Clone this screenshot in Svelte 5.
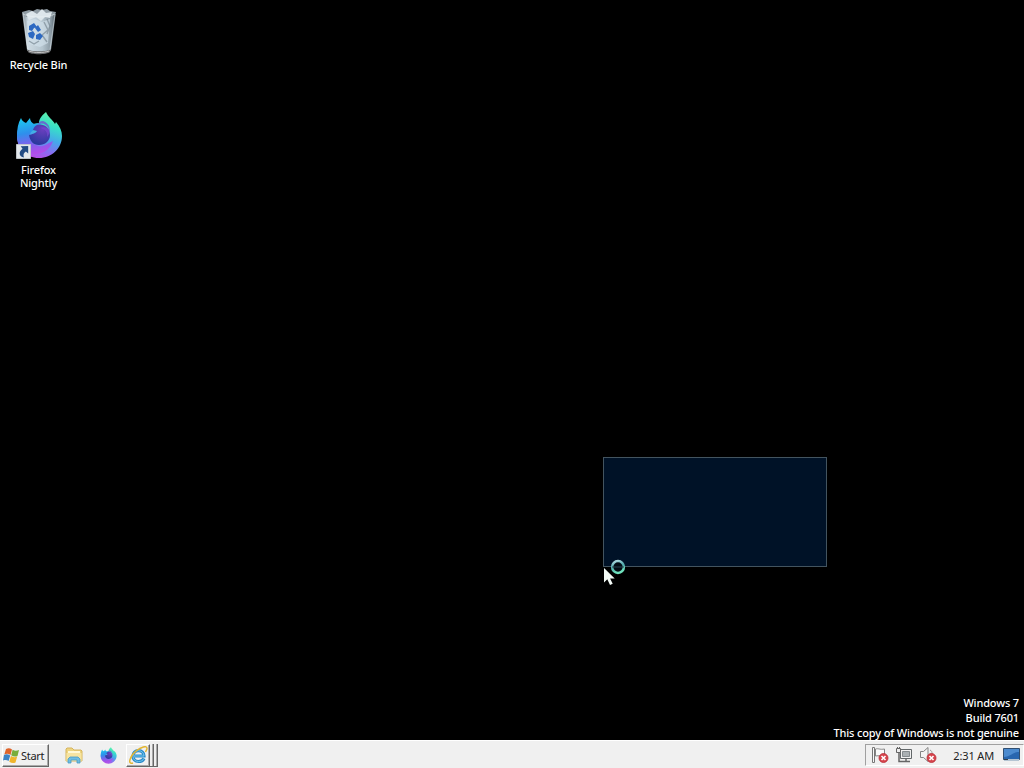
<script lang="ts">
    interface Selection {
        x: number;
        y: number;
        width: number;
        height: number;
    }

    let selection: Selection = $state({ x: 603, y: 457, width: 224, height: 110 });
    let pointer = $state({ x: 603, y: 558 });
    let time = $state('2:31 AM');

    const buildInfo = ['Windows 7', 'Build 7601', 'This copy of Windows is not genuine'];
</script>

{#snippet firefox(id: string, size: number)}
    <svg width={size} height={size} viewBox="0 0 48 48" aria-hidden="true">
        <defs>
            <linearGradient id="{id}-body" x1="0.75" y1="0" x2="0.4" y2="1">
                <stop offset="0" stop-color="#62f3a8" />
                <stop offset="0.28" stop-color="#38dfc8" />
                <stop offset="0.55" stop-color="#45a8ea" />
                <stop offset="0.8" stop-color="#8b6cf2" />
                <stop offset="1" stop-color="#b94be6" />
            </linearGradient>
            <linearGradient id="{id}-fox" x1="0.3" y1="0" x2="0.5" y2="1">
                <stop offset="0" stop-color="#1cc6ee" />
                <stop offset="0.4" stop-color="#2e8fec" />
                <stop offset="0.7" stop-color="#7d62ee" />
                <stop offset="1" stop-color="#b54be8" />
            </linearGradient>
            <radialGradient id="{id}-globe" cx="0.65" cy="0.25" r="0.8">
                <stop offset="0" stop-color="#6a3fbe" />
                <stop offset="1" stop-color="#26389c" />
            </radialGradient>
        </defs>
        <path d="M31 1c2 5 7 8 9 12l1-2c4 5 6 9 6 14 0 12-10 22-23 22S2 38 2 25c0-4 1-7 3-10l19-3c0-4 3-8 7-11Z" fill="url(#{id}-body)" />
        <path d="M6 7c1 3 3 4 5 5l4-5c0 3 2 5 4 6l7-1c-1 3-3 5-6 6l-4 3c-2 3-1 8 2 11 4 4 10 4 14 1l6-3c-3 9-10 13-18 13C9 43 2 35 2 25 2 18 3 12 6 7Z" fill="url(#{id}-fox)" />
        <path d="M22 14c6-2 13 2 13 10 0 6-5 10-11 10s-9-4-10-10c3-1 6-1 8-4l-4-1c1-3 2-4 4-5Z" fill="url(#{id}-globe)" />
        <path d="M22 14c4-3 10-1 12 4-3-2-6-2-9-1 5 1 8 4 7 9 5-5 3-14-4-16-3 0-5 2-6 4Z" fill="#7747d0" opacity="0.75" />
    </svg>
{/snippet}

<div class="screen">
    <main class="desktop">
        <div class="shortcut recycle">
            <svg width="38" height="48" viewBox="0 0 38 48" aria-hidden="true">
                <defs>
                    <linearGradient id="bin" x1="0" x2="1">
                        <stop offset="0" stop-color="#77838c" />
                        <stop offset="0.18" stop-color="#cddae2" />
                        <stop offset="0.6" stop-color="#b5c5cf" />
                        <stop offset="0.85" stop-color="#8a99a3" />
                        <stop offset="1" stop-color="#4e5a62" />
                    </linearGradient>
                </defs>
                <path d="M2 5h34l-5 38c-2 4-22 4-24 0Z" fill="url(#bin)" />
                <path d="M2 5 9 3l4 1 4-2 5 1 5-1 3 2 6 1-4 5H6Z" fill="#8f9ba3" />
                <path d="m6 7 6-3 5 3 5-5 4 4 6-1-2 6-5-1-4 4-5-4-7 3Z" fill="#dde6eb" />
                <path d="M3 7c8 4 24 4 32 0M3 6l5 37M35 7l-5 36" fill="none" stroke="#eef4f7" stroke-width="0.8" opacity="0.6" />
                <path d="m7 14 8-2 7 3 8-3-2 24-8 4-11-3Z" fill="#d0dfea" opacity="0.7" />
                <path d="m24 15 4 8-6 5 5 7M9 34l5 3 5-3M27 12l3 7-3 8" fill="none" stroke="#73838e" stroke-width="1.4" opacity="0.65" />
                <path d="m9 19 5-3 3 4-3 1-2 3-3-1Zm9-1 3 5-3 2-3-4ZM8 26l5-2 2 3-2 5-4-2Zm8 2 4-2 3 3-3 4-4-1Z" fill="#2c69c2" />
                <path d="M7 42c2 3 22 3 24 0l-1 3c-3 3-20 3-22 0Z" fill="#696b6d" />
                <path d="M9 44c5 2 15 2 20 0" fill="none" stroke="#c4c4c4" />
            </svg>
            <span class="label">Recycle Bin</span>
        </div>

        <div class="shortcut nightly">
            <div class="icon">
                {@render firefox('desk', 48)}
                <svg class="arrow" width="15" height="15" viewBox="0 0 16 16" aria-hidden="true">
                    <path d="M.5.5h15v15H.5Z" fill="#e3e8ec" stroke="#c3c9cd" />
                    <path d="M5 2.500 13 2v8l-2.500-2C8 9.500 7.500 11.500 8.500 14.500 3 13.500 2.500 8 7 5Z" fill="#224b84" />
                </svg>
            </div>
            <span class="label">Firefox<br />Nightly</span>
        </div>

        <div
            class="selection"
            style="left: {selection.x}px; top: {selection.y}px; width: {selection.width}px; height: {selection.height}px"
        ></div>

        <svg class="pointer" style="left: {pointer.x}px; top: {pointer.y}px" width="24" height="30" viewBox="0 0 24 30" aria-hidden="true">
            <defs>
                <linearGradient id="busy" x1="0" y1="0" x2="0.3" y2="1">
                    <stop offset="0" stop-color="#b6dde4" />
                    <stop offset="0.5" stop-color="#4fa9ac" />
                    <stop offset="1" stop-color="#6fe2bd" />
                </linearGradient>
            </defs>
            <circle cx="15" cy="9" r="5.9" fill="#020b14" stroke="url(#busy)" stroke-width="2.5" />
            <path d="M9 9h12" stroke="#26434f" />
            <path d="M1 10v14.5l3.3-3.2L7 27l2.7-1.2L7.1 20.5h4.6Z" fill="#f4fbf7" />
        </svg>

        <div class="build">
            {#each buildInfo as line}
                <div>{line}</div>
            {/each}
        </div>
    </main>

    <footer class="taskbar">
        <button class="start">
            <svg width="17" height="17" viewBox="0 0 17 17" aria-hidden="true">
                <path d="M3 2c2-1 4-1 6 .5L7.500 8C5.500 6.500 3.500 6.500 1.300 7.500Z" fill="#df642b" />
                <path d="M9.600 2.800c2 1.300 4 1.300 6.400.3L14.500 9c-2 1-4 .8-6.300-.7Z" fill="#78ad3b" />
                <path d="M1 8c2-1 4-1 6.200.6L5.600 14C4 12.800 2 12.800 0 13.500Z" fill="#3c83c6" />
                <path d="M7.900 9c2 1.300 4 1.500 6.300.6L12.500 15.500c-2 1-4 .8-6.200-.8Z" fill="#f0b52d" />
            </svg>
            <span>Start</span>
        </button>

        <div class="quick">
            <svg width="18" height="17" viewBox="0 0 18 17" aria-hidden="true">
                <path d="M1 14V2l1-1h5l2 2h7l1 1v10Z" fill="#eed580" stroke="#d5b45e" />
                <path d="M3 4h12v3H3Z" fill="#fff9d7" />
                <path d="M1.500 6h15v8h-15Z" fill="#f7e4a1" />
                <path d="M3 16v-4l2-2h8l2 2v4h-3v-3H6v3Z" fill="#70bde1" stroke="#4799c4" stroke-width="0.8" />
            </svg>
            {@render firefox('quick', 17)}
        </div>

        <div class="group">
            <button class="task" aria-label="Internet Explorer">
                <svg width="19" height="19" viewBox="0 0 19 19" aria-hidden="true">
                    <path d="M15 12.500c-1 2-3 3-5.500 3-3.500 0-5.500-2.300-5.500-5.300 0-3.200 2.300-5.500 5.500-5.500s5.500 2.200 5.500 5.300H6" fill="none" stroke="#2989ca" stroke-width="3.200" />
                    <path d="M15 12.500c-1 2-3 3-5.500 3-3.500 0-5.500-2.300-5.500-5.300 0-3.200 2.300-5.500 5.500-5.500s5.500 2.200 5.500 5.300H6" fill="none" stroke="#73c9ee" />
                    <path d="M4 17C-2 19 1 10 7 5c5-4 11-6 11-2.500 0 1-1 2.500-1.500 3.500" fill="none" stroke="#e3b632" stroke-width="1.500" />
                </svg>
            </button>
            <i></i>
            <i></i>
        </div>

        <div class="tray">
            {#snippet muted()}
                <circle cx="12.500" cy="12" r="4.500" fill="#d7444c" stroke="#b72d37" stroke-width="0.8" />
                <path d="m10.500 10 4 4m0-4-4 4" stroke="#fff" stroke-width="1.600" />
            {/snippet}
            <svg width="18" height="18" viewBox="0 0 18 18" aria-hidden="true">
                <path d="M1.500 1.500h2v15h-2Z" fill="#f8f8f8" stroke="#777" />
                <path d="M4.500 3c3-1 4 1 9 0v7c-4 1-5-1-9 0Z" fill="#fafafa" stroke="#858585" />
                {@render muted()}
            </svg>
            <svg width="18" height="18" viewBox="0 0 18 18" aria-hidden="true">
                <path d="M5.500 3.500h11v9h-11Z" fill="#f1f1f1" stroke="#626769" />
                <path d="M7.500 5.500h7v5h-7Z" fill="#aab0b3" stroke="#858b8e" />
                <path d="M11 13v2M7 15.500h8" stroke="#666" stroke-width="1.500" />
                <path d="M4 6v9.500h3" fill="none" stroke="#646464" stroke-width="1.500" />
                <path d="M1.500 2.500h4v4h-4ZM2.500 1v1.500m2-1.500v1.500" fill="#ededed" stroke="#646464" />
            </svg>
            <svg width="18" height="18" viewBox="0 0 18 18" aria-hidden="true">
                <path d="M1.500 5.500h3L9 1.500v14l-4.500-4h-3Z" fill="#f4f4f4" stroke="#858585" />
                <path d="M11 4c2 1 2 2 2 4" fill="none" stroke="#999" />
                {@render muted()}
            </svg>
            <span class="clock">{time}</span>
            <svg width="17" height="14" viewBox="0 0 17 14" aria-hidden="true">
                <path d="M.5.5h16v11H.5Z" fill="#2866af" stroke="#304e70" />
                <path d="M1 1h15v3C10 4 7 9 1 9Z" fill="#4c8bcf" />
                <path d="M1 11h15v2H1Z" fill="#b5c5d3" />
                <path d="M1 11.500h4" stroke="#323f49" />
            </svg>
        </div>
    </footer>
</div>

<style>
    :global(body) {
        margin: 0;
        background: #000;
    }

    .screen {
        display: flex;
        flex-direction: column;
        width: 1024px;
        height: 768px;
        overflow: hidden;
        font-family: "Noto Sans", "Open Sans", sans-serif;
        font-size: 11px;
        letter-spacing: -0.15px;
        cursor: default;
    }

    .desktop {
        position: relative;
        display: flex;
        flex: 1;
        flex-direction: column;
        box-sizing: border-box;
        padding-top: 7px;
        background: #000;
        color: #fff;
    }

    .shortcut {
        display: flex;
        flex-direction: column;
        align-items: center;
        width: 77px;
    }

    .shortcut svg {
        display: block;
    }

    .recycle {
        height: 104px;
    }

    .label {
        margin-top: 3px;
        font-weight: 500;
        line-height: 13px;
        text-align: center;
        white-space: nowrap;
    }

    .icon {
        position: relative;
    }

    .nightly .label {
        margin-top: 4px;
    }

    .arrow {
        position: absolute;
        left: 1px;
        bottom: 0;
    }

    .selection {
        position: absolute;
        box-sizing: border-box;
        border: 1px solid #43545f;
        background: #001227;
    }

    .pointer {
        position: absolute;
    }

    .build {
        display: flex;
        flex-direction: column;
        align-items: flex-end;
        margin-top: auto;
        padding-right: 5px;
        font-weight: 500;
        line-height: 15px;
    }

    .build div:nth-child(2) {
        line-height: 16px;
    }

    .build div:last-child {
        line-height: 14px;
    }

    .taskbar {
        display: flex;
        align-items: center;
        box-sizing: border-box;
        height: 28px;
        padding: 1px 0 0 2px;
        border-top: 1px solid #fff;
        background: #f0f0f0;
        color: #222;
    }

    button {
        box-sizing: border-box;
        height: 23px;
        padding: 0;
        border: 1px solid;
        border-color: #fff #666 #666 #fff;
        background: #f0f0f0;
        box-shadow: inset -1px -1px #aaa;
        color: inherit;
        font: inherit;
    }

    .start {
        display: flex;
        align-items: center;
        gap: 1px;
        width: 47px;
        letter-spacing: -0.3px;
    }

    .quick {
        display: flex;
        align-items: center;
        gap: 17px;
        margin-left: 16px;
    }

    .group {
        display: flex;
        margin-left: 9px;
    }

    .task {
        display: flex;
        align-items: center;
        justify-content: center;
        width: 24px;
    }

    .group i {
        box-sizing: border-box;
        width: 4px;
        height: 23px;
        border-right: 1px solid #666;
        border-bottom: 1px solid #666;
        box-shadow: inset -1px 0 #aaa;
    }

    .tray {
        display: flex;
        align-items: center;
        box-sizing: border-box;
        height: 22px;
        margin-left: auto;
        padding: 0 3px 0 5px;
        border: 1px solid;
        border-color: #a0a0a0 #fff #fff #a0a0a0;
        gap: 6px;
    }

    .clock {
        margin: 0 3px 0 10px;
        white-space: nowrap;
    }
</style>
